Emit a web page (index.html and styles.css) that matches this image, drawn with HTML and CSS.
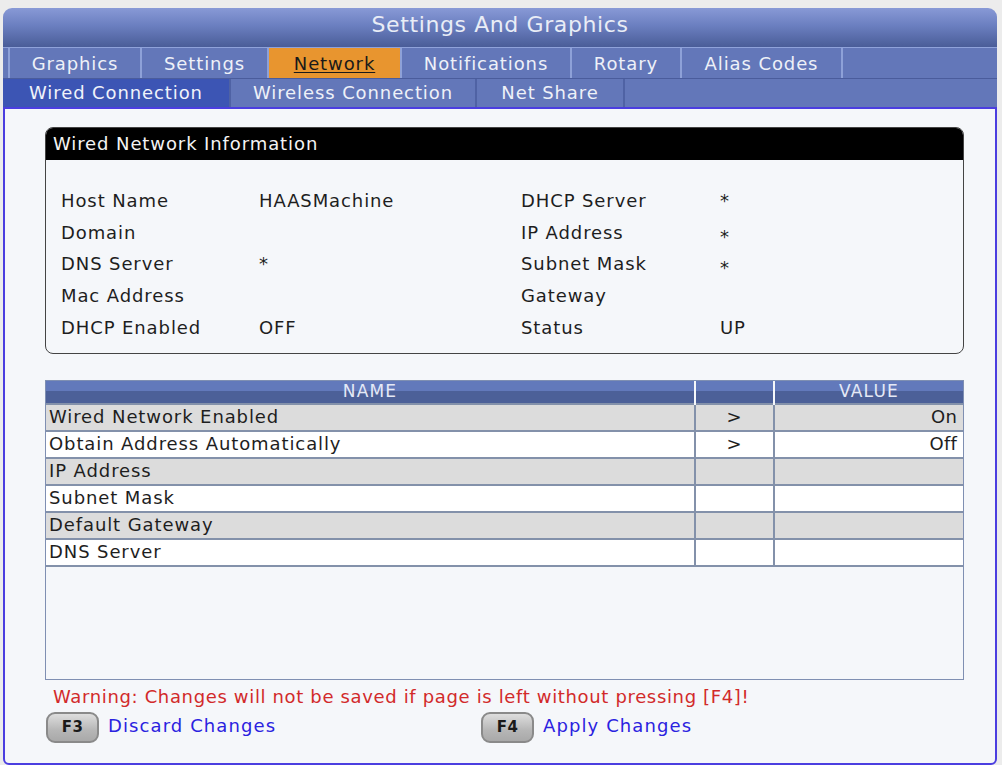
FILE: index.html
```html
<!DOCTYPE html>
<html>
<head>
<meta charset="utf-8">
<title>Settings And Graphics</title>
<link rel="stylesheet" href="styles.css">
</head>
<body>
<div class="app">
  <div class="titlebar">Settings And Graphics</div>
  <div class="tabs tabs-main">
    <div class="tab t-graphics">Graphics</div>
    <div class="tab t-settings">Settings</div>
    <div class="tab t-network active">Network</div>
    <div class="tab t-notif">Notifications</div>
    <div class="tab t-rotary">Rotary</div>
    <div class="tab t-alias">Alias Codes</div>
    <div class="tab t-fill"></div>
  </div>
  <div class="tabs tabs-sub">
    <div class="tab s-wired selected">Wired Connection</div>
    <div class="tab s-wireless">Wireless Connection</div>
    <div class="tab s-share">Net Share</div>
    <div class="tab t-fill"></div>
  </div>
  <div class="panel">
    <div class="infobox">
      <div class="info-head">Wired Network Information</div>
      <div class="info-body">
        <div class="lbl">Host Name</div><div class="val">HAASMachine</div>
        <div class="lbl">DHCP Server</div><div class="val">*</div>
        <div class="lbl">Domain</div><div class="val"></div>
        <div class="lbl">IP Address</div><div class="val low">*</div>
        <div class="lbl">DNS Server</div><div class="val">*</div>
        <div class="lbl">Subnet Mask</div><div class="val low">*</div>
        <div class="lbl">Mac Address</div><div class="val"></div>
        <div class="lbl">Gateway</div><div class="val"></div>
        <div class="lbl">DHCP Enabled</div><div class="val">OFF</div>
        <div class="lbl">Status</div><div class="val">UP</div>
      </div>
    </div>

    <div class="gridbox">
      <table class="settings">
        <colgroup><col class="c-name"><col class="c-arrow"><col class="c-value"></colgroup>
        <thead>
          <tr><th>NAME</th><th></th><th>VALUE</th></tr>
        </thead>
        <tbody>
          <tr class="odd"><td>Wired Network Enabled</td><td class="arrow">&gt;</td><td class="value">On</td></tr>
          <tr><td>Obtain Address Automatically</td><td class="arrow">&gt;</td><td class="value">Off</td></tr>
          <tr class="odd"><td>IP Address</td><td class="arrow"></td><td class="value"></td></tr>
          <tr><td>Subnet Mask</td><td class="arrow"></td><td class="value"></td></tr>
          <tr class="odd"><td>Default Gateway</td><td class="arrow"></td><td class="value"></td></tr>
          <tr><td>DNS Server</td><td class="arrow"></td><td class="value"></td></tr>
        </tbody>
      </table>
    </div>

    <div class="warning">Warning: Changes will not be saved if page is left without pressing [F4]!</div>
    <div class="actions">
      <div class="action"><span class="key">F3</span><span class="act-label">Discard Changes</span></div>
      <div class="action"><span class="key">F4</span><span class="act-label">Apply Changes</span></div>
    </div>
  </div>
</div>
</body>
</html>
```

FILE: styles.css
```css
* { box-sizing: border-box; }
html, body { margin: 0; padding: 0; }
body {
  background: #ececec;
  font-family: "DejaVu Sans", "Liberation Sans", sans-serif;
  letter-spacing: 0.9px;
  width: 1002px;
  height: 765px;
  overflow: hidden;
}
.app {
  margin: 8px 5px 0 3px;
}
.titlebar {
  height: 39px;
  border-radius: 9px 9px 0 0;
  background: linear-gradient(#8899d6, #6b7fc0 45%, #4a5d98);
  color: #e9edf6;
  font-size: 22px;
  letter-spacing: 0.6px;
  text-align: center;
  line-height: 34px;
}
.tabs {
  display: flex;
  background: #6377b9;
}
.tabs-main {
  height: 31px;
  padding-left: 5px;
  border-top: 1px solid #8fa2da;
}
.tabs-sub {
  height: 29px;
  border-top: 1px solid #4a5c9c;
}
.tab {
  color: #eef1f8;
  font-size: 18px;
  text-align: center;
  border-left: 2px solid #8ea1d8;
  white-space: nowrap;
}
.tabs-main .tab { line-height: 31px; }
.tabs-sub .tab { line-height: 28px; border-left: 2px solid #4f62a4; }
.tabs-sub .tab:first-child { border-left: none; }
.t-graphics { width: 132px; }
.t-settings { width: 127px; }
.t-network { width: 133px; }
.t-notif { width: 170px; }
.t-rotary { width: 110px; }
.t-alias { width: 161px; }
.t-fill { flex: 1; }
.tab.active {
  background: #e8952f;
  color: #1a1a1a;
  text-decoration: underline;
  text-underline-offset: 2px;
  border-left-color: #8ea1d8;
}
.s-wired { width: 226px; }
.s-wireless { width: 246px; }
.s-share { width: 148px; }
.tab.selected {
  background: #3c55b4;
  color: #f0f3fa;
}
.panel {
  height: 658px;
  background: #f5f7fa;
  border: 2px solid #4b3ee0;
  border-radius: 0 0 6px 6px;
  padding: 18px 31px 0 40px;
}
.infobox {
  border: 1px solid #444;
  border-radius: 8px;
  overflow: hidden;
  background: #f5f7fa;
}
.info-head {
  height: 32px;
  background: #000;
  color: #f4f4f4;
  font-size: 18px;
  line-height: 31px;
  padding-left: 7px;
}
.info-body {
  display: grid;
  grid-template-columns: 198px 262px 199px 1fr;
  grid-auto-rows: 31.6px;
  padding: 25px 0 10px 15px;
  font-size: 18px;
  color: #1e1e1e;
  align-items: center;
}
.val.low { position: relative; top: 4px; }
.gridbox {
  margin-top: 26px;
  height: 300px;
  border: 1px solid #7f8fb2;
  background: #f5f7fa;
}
.settings {
  width: 100%;
  table-layout: fixed;
  border-collapse: collapse;
  font-size: 18px;
  color: #1e1e1e;
}
.c-name { width: 649px; }
.c-arrow { width: 79px; }
.settings th {
  height: 23px;
  padding: 0;
  font-weight: normal;
  font-size: 17px;
  letter-spacing: 1.2px;
  color: #e4e9f6;
  background: linear-gradient(#6279bb 0%, #6279bb 45%, #4c6098 45%, #4c6098 100%);
  border-left: 2px solid #f5f7fa;
  line-height: 20px;
  vertical-align: top;
}
.settings th:first-child { border-left: none; }
.settings td {
  height: 27px;
  padding: 0 3px;
  border-top: 2px solid #8391aa;
  border-left: 2px solid #8391aa;
  background: #ffffff;
  line-height: 24px;
  white-space: nowrap;
}
.settings td:first-child { border-left: none; }
.settings tr.odd td { background: #dcdcdc; }
.settings tbody tr:last-child td { border-bottom: 2px solid #8391aa; }
.settings td.arrow { text-align: center; }
.settings td.value { text-align: right; padding-right: 6px; letter-spacing: 0.2px; }
.warning {
  margin-top: 4px;
  padding-left: 8px;
  color: #d22a2a;
  font-size: 18px;
  letter-spacing: 0.65px;
  line-height: 26px;
}
.actions {
  display: grid;
  grid-template-columns: 435px auto;
  padding-left: 1px;
  margin-top: 2px;
}
.action {
  display: flex;
  align-items: center;
}
.key {
  display: inline-block;
  width: 53px;
  height: 31px;
  border: 2px solid #8a8a8a;
  border-radius: 9px;
  background: linear-gradient(#dedede, #b6b6b6 60%, #a9a9a9);
  color: #1a1a1a;
  font-size: 15px;
  font-weight: bold;
  letter-spacing: 0.5px;
  text-align: center;
  line-height: 27px;
  margin-right: 9px;
}
.act-label {
  color: #2b22e0;
  font-size: 18px;
  letter-spacing: 1.1px;
  position: relative;
  top: -2px;
}
```
